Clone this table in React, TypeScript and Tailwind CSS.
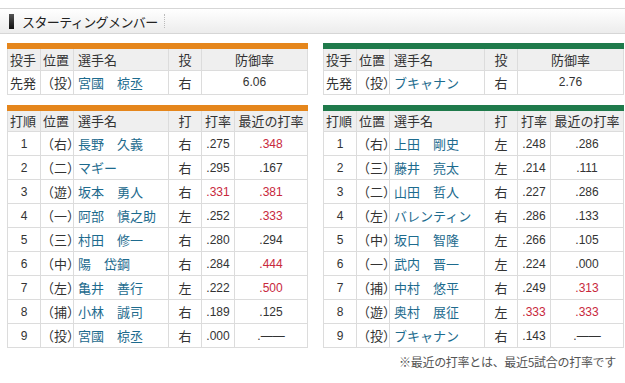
import React from "react";

type Batter = {
  no: number;
  pos: string;
  name: string;
  bat: string;
  avg: string;
  recent: string;
  avgRed?: boolean;
  recentRed?: boolean;
};

const giants: Batter[] = [
  { no: 1, pos: "（右）", name: "長野　久義", bat: "右", avg: ".275", recent: ".348", recentRed: true },
  { no: 2, pos: "（二）", name: "マギー", bat: "右", avg: ".295", recent: ".167" },
  { no: 3, pos: "（遊）", name: "坂本　勇人", bat: "右", avg: ".331", recent: ".381", avgRed: true, recentRed: true },
  { no: 4, pos: "（一）", name: "阿部　慎之助", bat: "左", avg: ".252", recent: ".333", recentRed: true },
  { no: 5, pos: "（三）", name: "村田　修一", bat: "右", avg: ".280", recent: ".294" },
  { no: 6, pos: "（中）", name: "陽　岱鋼", bat: "右", avg: ".284", recent: ".444", recentRed: true },
  { no: 7, pos: "（左）", name: "亀井　善行", bat: "左", avg: ".222", recent: ".500", recentRed: true },
  { no: 8, pos: "（捕）", name: "小林　誠司", bat: "右", avg: ".189", recent: ".125" },
  { no: 9, pos: "（投）", name: "宮國　椋丞", bat: "右", avg: ".000", recent: ".——" },
];

const baystars: Batter[] = [
  { no: 1, pos: "（右）", name: "上田　剛史", bat: "左", avg: ".248", recent: ".286" },
  { no: 2, pos: "（三）", name: "藤井　亮太", bat: "左", avg: ".214", recent: ".111" },
  { no: 3, pos: "（二）", name: "山田　哲人", bat: "右", avg: ".227", recent: ".286" },
  { no: 4, pos: "（左）", name: "バレンティン", bat: "右", avg: ".286", recent: ".133" },
  { no: 5, pos: "（中）", name: "坂口　智隆", bat: "左", avg: ".266", recent: ".105" },
  { no: 6, pos: "（一）", name: "武内　晋一", bat: "左", avg: ".224", recent: ".000" },
  { no: 7, pos: "（捕）", name: "中村　悠平", bat: "右", avg: ".249", recent: ".313", recentRed: true },
  { no: 8, pos: "（遊）", name: "奥村　展征", bat: "左", avg: ".333", recent: ".333", avgRed: true, recentRed: true },
  { no: 9, pos: "（投）", name: "ブキャナン", bat: "右", avg: ".143", recent: ".——" },
];

const cell = "border border-[#dcdcdc] h-[24px] p-0 align-middle";
const num = "font-['Liberation_Sans',sans-serif] text-[12px] text-center";

function PitcherTable({ color, name, era }: { color: string; name: string; era: string }) {
  return (
    <table className={`w-[300px] border-collapse table-fixed border-t-[6px] ${color}`}>
      <colgroup>
        <col className="w-[33px]" />
        <col className="w-[33px]" />
        <col className="w-[95px]" />
        <col className="w-[33px]" />
        <col className="w-[106px]" />
      </colgroup>
      <tbody>
        <tr className="bg-[#efefef]">
          <td className={`${cell} pl-[2px]`}>投手</td>
          <td className={`${cell} pl-[2px]`}>位置</td>
          <td className={`${cell} pl-[4px]`}>選手名</td>
          <td className={`${cell} text-center`}>投</td>
          <td className={`${cell} text-center`}>防御率</td>
        </tr>
        <tr className="bg-white">
          <td className={`${cell} pl-[2px]`}>先発</td>
          <td className={`${cell}`}>（投）</td>
          <td className={`${cell} pl-[4px] text-[#1d6b8e]`}>{name}</td>
          <td className={`${cell} text-center`}>右</td>
          <td className={`${cell} ${num}`}>{era}</td>
        </tr>
      </tbody>
    </table>
  );
}

function BatterTable({ color, rows }: { color: string; rows: Batter[] }) {
  return (
    <table className={`w-[300px] border-collapse table-fixed border-t-[6px] ${color}`}>
      <colgroup>
        <col className="w-[33px]" />
        <col className="w-[33px]" />
        <col className="w-[95px]" />
        <col className="w-[33px]" />
        <col className="w-[33px]" />
        <col className="w-[73px]" />
      </colgroup>
      <tbody>
        <tr className="bg-[#efefef]">
          <td className={`${cell} pl-[2px]`}>打順</td>
          <td className={`${cell} pl-[2px]`}>位置</td>
          <td className={`${cell} pl-[4px]`}>選手名</td>
          <td className={`${cell} text-center`}>打</td>
          <td className={`${cell} text-center`}>打率</td>
          <td className={`${cell} text-center`}>最近の打率</td>
        </tr>
        {rows.map((r) => (
          <tr key={r.no} className="bg-white">
            <td className={`${cell} ${num}`}>{r.no}</td>
            <td className={`${cell}`}>{r.pos}</td>
            <td className={`${cell} pl-[4px] text-[#1d6b8e]`}>{r.name}</td>
            <td className={`${cell} text-center`}>{r.bat}</td>
            <td className={`${cell} ${num} ${r.avgRed ? "text-[#c8283c]" : ""}`}>{r.avg}</td>
            <td className={`${cell} ${num} ${r.recentRed ? "text-[#c8283c]" : ""}`}>{r.recent}</td>
          </tr>
        ))}
      </tbody>
    </table>
  );
}

export default function App() {
  return (
    <div className="w-[625px] h-[383px] bg-white text-[#333] text-[13px] leading-none font-['Noto_Sans_CJK_JP',sans-serif] overflow-hidden">
      <div className="mt-[8px] h-[26px] border-y border-[#d6d6d6] bg-gradient-to-b from-white to-[#ececec] flex items-center">
        <span className="ml-[9px] w-[5px] h-[15px] bg-gradient-to-b from-[#555] to-[#111]" />
        <span className="ml-[8px] text-[13px] tracking-[-0.6px] text-[#222]">スターティングメンバー</span>
        <span className="ml-[6px] h-[14px] border-l border-dotted border-[#bbb]" />
      </div>
      <div className="flex gap-[15px] ml-[7px] mt-[9px]">
        <div className="flex flex-col gap-[10px]">
          <PitcherTable color="border-t-[#e5861c]" name="宮國　椋丞" era="6.06" />
          <BatterTable color="border-t-[#e5861c]" rows={giants} />
        </div>
        <div className="flex flex-col gap-[10px]">
          <PitcherTable color="border-t-[#1f7a4b]" name="ブキャナン" era="2.76" />
          <BatterTable color="border-t-[#1f7a4b]" rows={baystars} />
          <p className="text-right pr-[8px] mt-[-2px] text-[12px] tracking-[-0.3px] text-[#555]">
            ※最近の打率とは、最近5試合の打率です
          </p>
        </div>
      </div>
    </div>
  );
}
